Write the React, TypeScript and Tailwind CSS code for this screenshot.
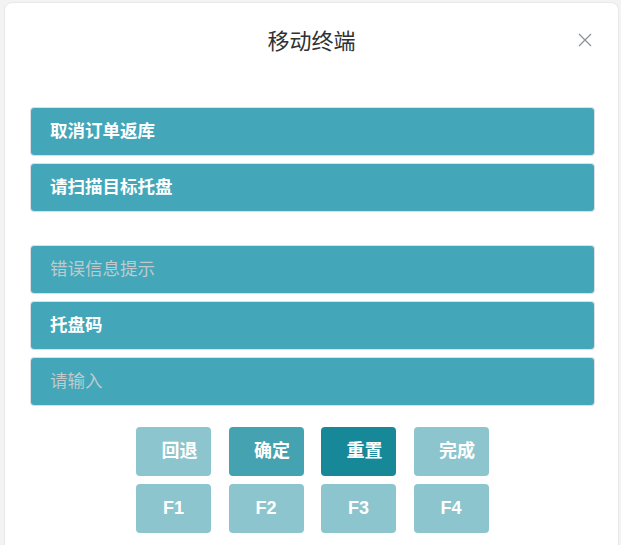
import React from 'react'

const font = { fontFamily: '"Liberation Sans", "Noto Sans CJK SC", sans-serif' }

const Row = ({ text, placeholder }: { text: string; placeholder?: boolean }) => (
  <div
    className={`h-[49px] flex items-center pl-[19px] rounded-[4px] border border-[#dcdfe6] bg-[#43a7b9] text-[17.5px] ${
      placeholder ? 'text-[#bfcacd]' : 'text-white font-bold'
    }`}
  >
    {text}
  </div>
)

const Btn = ({ text, color, cn }: { text: string; color: string; cn?: boolean }) => (
  <button
    className={`w-[75px] h-[49px] rounded-[4px] flex items-center justify-center text-white font-bold text-[18px] ${color} ${
      cn ? 'pl-[12px]' : ''
    }`}
  >
    {text}
  </button>
)

export default function App() {
  return (
    <div className="w-[621px] h-[545px] bg-[#f3f3f3] overflow-hidden pl-[4px] pt-[2px]" style={font}>
      <div className="relative w-[615px] h-[560px] bg-white rounded-[8px] border border-[#e8e8e8]">
        <div className="pt-[25px] text-center text-[22px] leading-[28px] text-[#303133]">移动终端</div>
        <button className="absolute right-[26px] top-[30px] text-[#909399]">
          <svg width="14" height="14" viewBox="0 0 14 14" fill="none" stroke="currentColor" strokeWidth="1.3">
            <path d="M1 1L13 13M13 1L1 13" />
          </svg>
        </button>

        <div className="mt-[51px] pl-[25px] pr-[23px]">
          <div className="flex flex-col gap-[7px]">
            <Row text="取消订单返库" />
            <Row text="请扫描目标托盘" />
          </div>
          <div className="mt-[33px] flex flex-col gap-[7px]">
            <Row text="错误信息提示" placeholder />
            <Row text="托盘码" />
            <Row text="请输入" placeholder />
          </div>
          <div className="mt-[21px] flex flex-col gap-[8px] pl-[106px]">
            <div className="flex gap-[17.5px]">
              <Btn text="回退" color="bg-[#8cc5cd]" cn />
              <Btn text="确定" color="bg-[#45a3b1]" cn />
              <Btn text="重置" color="bg-[#178898]" cn />
              <Btn text="完成" color="bg-[#8cc5cd]" cn />
            </div>
            <div className="flex gap-[17.5px]">
              <Btn text="F1" color="bg-[#8cc5cd]" />
              <Btn text="F2" color="bg-[#8cc5cd]" />
              <Btn text="F3" color="bg-[#8cc5cd]" />
              <Btn text="F4" color="bg-[#8cc5cd]" />
            </div>
          </div>
        </div>
      </div>
    </div>
  )
}
